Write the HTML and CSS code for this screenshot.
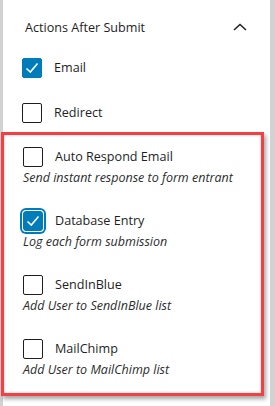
FILE: index.html
```html
<!DOCTYPE html>
<html lang="en">
<head>
    <meta charset="UTF-8">
    <meta name="viewport" content="width=device-width, initial-scale=1.0">
    <link rel="stylesheet" href="styles.css">
    <title>Actions After Submit</title>
</head>
<body>
    <div class="panel">
        <div class="panel-header">
            <span class="panel-title">Actions After Submit</span>
            <svg class="chevron" width="14" height="8" viewBox="0 0 14 8">
                <polyline points="1,7 7,1.5 13,7" fill="none" stroke="#1e1e1e" stroke-width="1.5"/>
            </svg>
        </div>
        <div class="action-list">
            <label class="action">
                <span class="checkbox checked">
                    <svg width="20" height="20" viewBox="0 0 20 20"><polyline points="4.5,10.5 8.3,14 15.5,5.5" fill="none" stroke="#fff" stroke-width="1.6"/></svg>
                </span>
                <span class="action-label">Email</span>
            </label>
            <label class="action">
                <span class="checkbox"></span>
                <span class="action-label">Redirect</span>
            </label>
        </div>
        <div class="highlight">
            <div class="action-item">
                <label class="action">
                    <span class="checkbox"></span>
                    <span class="action-label">Auto Respond Email</span>
                </label>
                <div class="action-help">Send instant response to form entrant</div>
            </div>
            <div class="action-item">
                <label class="action">
                    <span class="checkbox checked focused">
                        <svg width="20" height="20" viewBox="0 0 20 20"><polyline points="4.5,10.5 8.3,14 15.5,5.5" fill="none" stroke="#fff" stroke-width="1.6"/></svg>
                    </span>
                    <span class="action-label">Database Entry</span>
                </label>
                <div class="action-help">Log each form submission</div>
            </div>
            <div class="action-item">
                <label class="action">
                    <span class="checkbox"></span>
                    <span class="action-label">SendInBlue</span>
                </label>
                <div class="action-help">Add User to SendInBlue list</div>
            </div>
            <div class="action-item">
                <label class="action">
                    <span class="checkbox"></span>
                    <span class="action-label">MailChimp</span>
                </label>
                <div class="action-help">Add User to MailChimp list</div>
            </div>
        </div>
    </div>
</body>
</html>
```

FILE: styles.css
```css
body {
    margin: 0;
    background-color: #d2d2d2;
    font-family: "Open Sans", "Noto Sans", Arial, sans-serif;
    color: #1e1e1e;
    height: 406px;
    overflow: hidden;
}

.panel {
    margin-left: 3px;
    width: 267px;
    height: 406px;
    background-color: #fff;
    box-sizing: border-box;
}

.panel-header {
    display: flex;
    align-items: center;
    justify-content: space-between;
    padding: 18px 23px 0 22px;
    height: 20px;
}

.panel-title {
    font-size: 12.6px;
    line-height: 20px;
    color: #1e1e1e;
}

.chevron {
    display: block;
    margin-top: -2px;
}

.action-list {
    display: flex;
    flex-direction: column;
    gap: 25px;
    padding: 20px 22px 0 19px;
}

.action {
    display: flex;
    align-items: center;
    height: 20px;
}

.checkbox {
    width: 20px;
    height: 20px;
    box-sizing: border-box;
    border: 1px solid #1e1e1e;
    border-radius: 2px;
    background-color: #fff;
    flex-shrink: 0;
}

.checkbox svg {
    display: block;
    margin: -1px;
}

.checkbox.checked {
    background-color: #007cba;
    border-color: #007cba;
}

.checkbox.focused {
    box-shadow: 0 0 0 1px #fff, 0 0 0 3px #007cba;
    border-radius: 3px;
}

.action-label {
    margin-left: 12px;
    font-size: 12.6px;
    line-height: 20px;
}

.highlight {
    margin: 9px 6px 0 -2px;
    border: 3px solid #ef4146;
    padding: 12px 0 14px 19px;
    display: flex;
    flex-direction: column;
    gap: 24px;
    box-shadow: 2px 3px 4px rgba(0, 0, 0, 0.35), inset 0 0 3px rgba(0, 0, 0, 0.25);
}

.action-help {
    font-size: 12.5px;
    font-style: italic;
    line-height: 18px;
    margin-top: 2px;
    color: #2c2c2c;
}
```
